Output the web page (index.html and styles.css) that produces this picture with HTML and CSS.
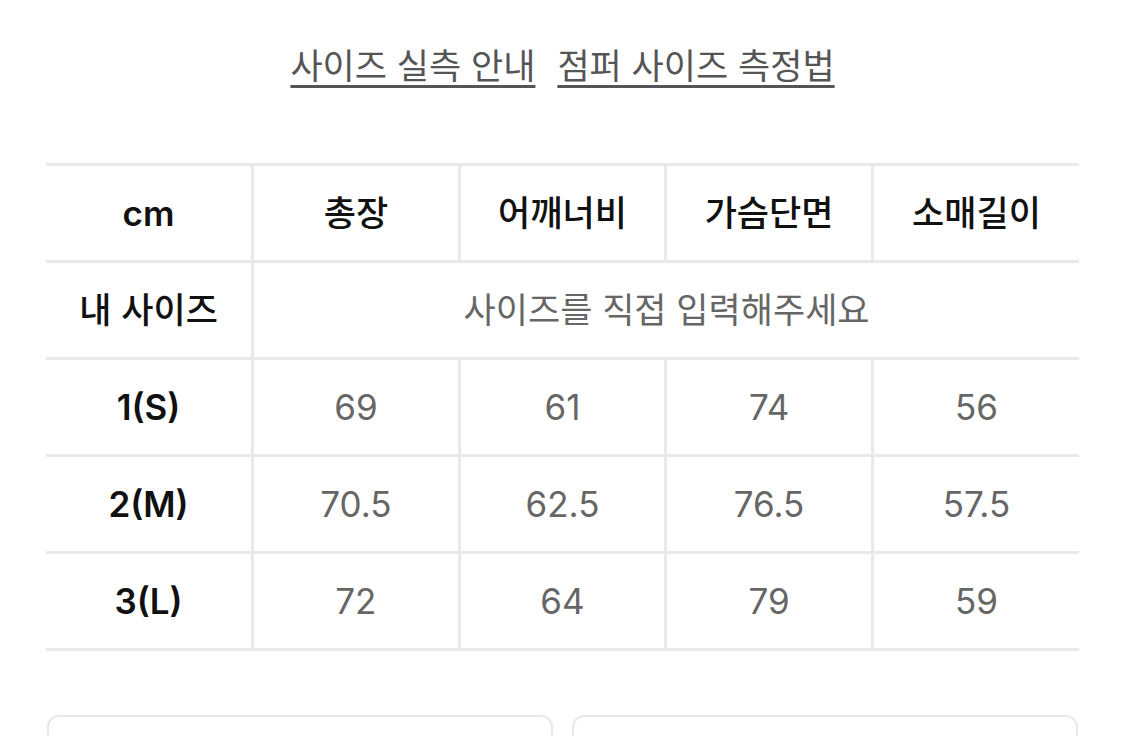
FILE: index.html
```html
<!DOCTYPE html>
<html lang="ko">
<head>
<meta charset="utf-8">
<title>사이즈 실측 안내</title>
<link rel="stylesheet" href="styles.css">
</head>
<body>
<main class="page">
  <nav class="guide-links">
    <a href="#" class="guide-link">사이즈 실측 안내</a>
    <a href="#" class="guide-link">점퍼 사이즈 측정법</a>
  </nav>

  <table class="size-table">
    <thead>
      <tr class="head-row">
        <th class="latin">cm</th>
        <th>총장</th>
        <th>어깨너비</th>
        <th>가슴단면</th>
        <th>소매길이</th>
      </tr>
    </thead>
    <tbody>
      <tr>
        <th>내 사이즈</th>
        <td colspan="4" class="my-size">사이즈를 직접 입력해주세요</td>
      </tr>
      <tr>
        <th class="latin">1(S)</th>
        <td class="latin">69</td><td class="latin">61</td><td class="latin">74</td><td class="latin">56</td>
      </tr>
      <tr>
        <th class="latin">2(M)</th>
        <td class="latin">70.5</td><td class="latin">62.5</td><td class="latin">76.5</td><td class="latin">57.5</td>
      </tr>
      <tr>
        <th class="latin">3(L)</th>
        <td class="latin">72</td><td class="latin">64</td><td class="latin">79</td><td class="latin">59</td>
      </tr>
    </tbody>
  </table>

  <div class="option-boxes">
    <div class="option-box"></div>
    <div class="option-box"></div>
  </div>
</main>
</body>
</html>
```

FILE: styles.css
```css
* {
  box-sizing: border-box;
}

html, body {
  margin: 0;
  padding: 0;
  background: #ffffff;
}

body {
  font-family: "Noto Sans CJK KR", sans-serif;
  color: #111111;
}

.page {
  padding: 0 46px;
}

.guide-links {
  display: flex;
  justify-content: center;
  gap: 22px;
  padding-top: 38px;
  height: 163px;
}

.guide-link {
  font-size: 35px;
  line-height: 52px;
  height: 54px;
  color: #555555;
  text-decoration: underline;
  text-decoration-thickness: 3px;
  text-underline-offset: 6px;
}

.size-table {
  width: 100%;
  border-collapse: collapse;
  table-layout: fixed;
}

.size-table tr {
  height: 97px;
  border-top: 3px solid #e9e9e9;
  border-bottom: 3px solid #e9e9e9;
}

.size-table th,
.size-table td {
  padding: 0 0 4px;
  text-align: center;
  vertical-align: middle;
  font-size: 35px;
  line-height: 1.2;
}

.size-table th {
  font-weight: 500;
  color: #111111;
}

.size-table td,
.head-row th + th {
  border-left: 3px solid #e9e9e9;
}

.size-table td {
  color: #666666;
  font-weight: 400;
}

.size-table .latin {
  font-family: "Inter", "Liberation Sans", sans-serif;
  font-size: 35px;
  padding: 0;
}

.size-table th.latin {
  font-weight: 600;
  color: #111111;
}

.option-boxes {
  display: flex;
  gap: 19px;
  margin-top: 64px;
  padding: 0 1px;
}

.option-box {
  flex: 1;
  height: 80px;
  border: 2px solid #e8e8e8;
  border-radius: 12px;
}
```
